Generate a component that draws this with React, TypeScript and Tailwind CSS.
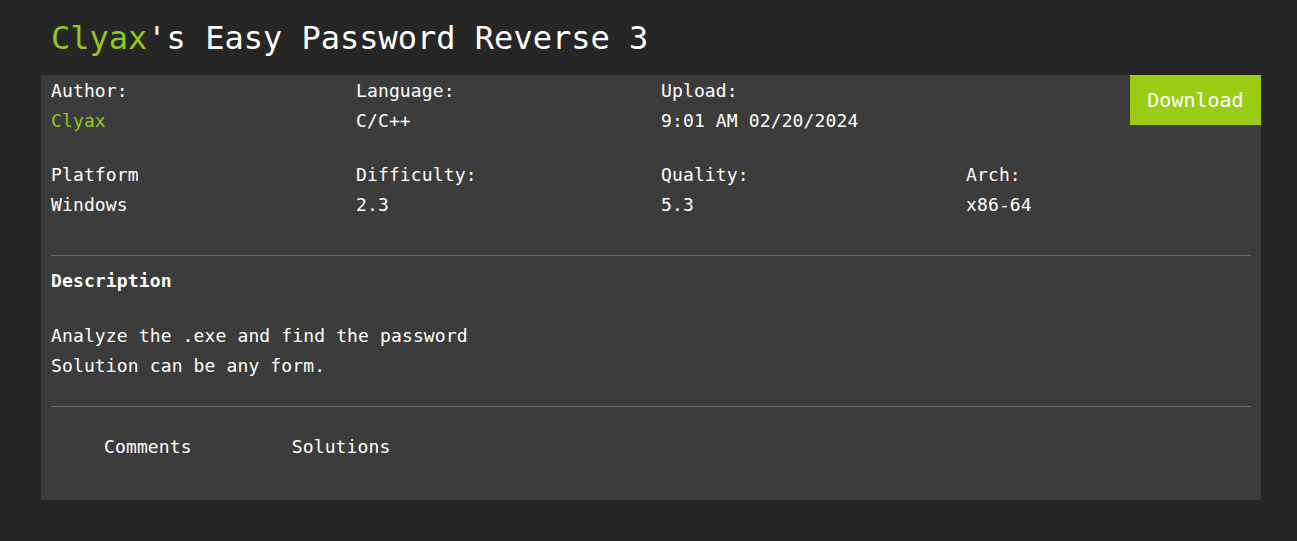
import React from "react";

const mono = { fontFamily: '"DejaVu Sans Mono", "Liberation Mono", monospace' };

const Field = ({ label, value, green }: { label: string; value: string; green?: boolean }) => (
  <div className="pl-[10px]">
    <p className="h-[30px] leading-[30px]">{label}</p>
    <p className={`h-[30px] leading-[30px] ${green ? "text-[#94c819]" : ""}`}>{value}</p>
  </div>
);

const App: React.FC = () => {
  return (
    <div className="min-h-[541px] bg-[#262626] px-[41px] text-white" style={mono}>
      <div className="h-[75px] flex items-center pl-[10px] pt-[1px]">
        <h1 className="text-[32px] leading-none">
          <span className="text-[#94c819]">Clyax</span>'s Easy Password Reverse 3
        </h1>
      </div>

      <div className="relative w-[1220px] h-[425px] bg-[#3c3c3c] pt-[0.5px] text-[18px] tracking-[0.13px]">
        <button className="absolute right-0 top-0 w-[131px] h-[50px] bg-[#9acc14] text-[20px] text-white tracking-normal">
          Download
        </button>

        {/* info grid */}
        <div className="grid grid-cols-4">
          <Field label="Author:" value="Clyax" green />
          <Field label="Language:" value="C/C++" />
          <Field label="Upload:" value="9:01 AM 02/20/2024" />
          <div />
        </div>
        <div className="grid grid-cols-4 mt-[24px]">
          <Field label="Platform" value="Windows" />
          <Field label="Difficulty:" value="2.3" />
          <Field label="Quality:" value="5.3" />
          <Field label="Arch:" value="x86-64" />
        </div>

        <div className="mx-[10px] mt-[35.5px] border-t border-[#6b6b6b]" />
        <p className="pl-[10px] mt-[10px] h-[30px] leading-[30px] font-bold">Description</p>
        <div className="pl-[10px] mt-[25px]">
          <p className="h-[30px] leading-[30px]">Analyze the .exe and find the password</p>
          <p className="h-[30px] leading-[30px]">Solution can be any form.</p>
        </div>

        <div className="mx-[10px] mt-[25px] border-t border-[#6b6b6b]" />
        <div className="flex gap-[100px] pl-[63px] mt-[25px]">
          <span className="h-[30px] leading-[30px]">Comments</span>
          <span className="h-[30px] leading-[30px]">Solutions</span>
        </div>
      </div>
    </div>
  );
};

export default App;
